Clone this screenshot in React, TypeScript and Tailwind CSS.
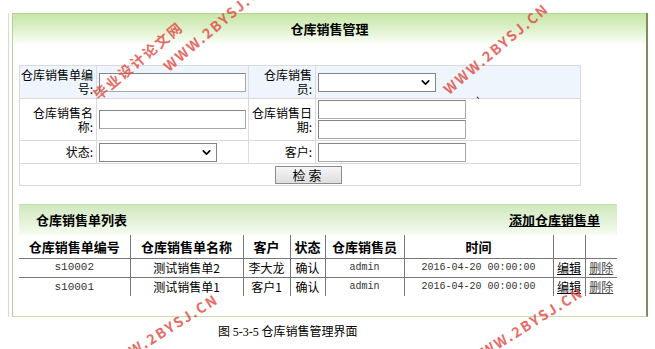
import { ChevronDown } from 'lucide-react'

const cjk = { fontFamily: '"Noto Sans CJK SC", "Liberation Sans", sans-serif' }

const Input = ({ w }: { w: string }) => (
  <div className={`h-[19px] ${w} border border-[#858585] border-r-[#a8a8a8] border-b-[#a8a8a8] bg-white`} />
)

const Select = ({ w }: { w: string }) => (
  <div className={`h-[19px] ${w} border border-[#858585] bg-white flex items-center justify-end pr-[3px]`}>
    <ChevronDown size={13} strokeWidth={3} className="text-black" />
  </div>
)

const rows = [
  { no: 's10002', name: '测试销售单2', cust: '李大龙', state: '确认', user: 'admin', time: '2016-04-20 00:00:00' },
  { no: 's10001', name: '测试销售单1', cust: '客户1', state: '确认', user: 'admin', time: '2016-04-20 00:00:00' },
]

const Mark = ({ text, cls }: { text: string; cls: string }) => (
  <span
    className={`absolute whitespace-nowrap font-bold text-[14px] tracking-[2px] text-[#e0483f] opacity-80 pointer-events-none ${cls}`}
    style={cjk}
  >
    {text}
  </span>
)

const lbl = 'border border-[#dadada] text-right whitespace-nowrap leading-[14px] pr-[3px] text-[12px]'
const cell = 'border border-[#dadada] pl-[2px]'

export default function App() {
  return (
    <div className="relative w-[655px] h-[349px] bg-white overflow-hidden text-[12px] text-black" style={cjk}>
      <div className="pl-[8px] pt-[13px]">
        <div className="w-[640px] border-l border-[#d3e3c2] pl-[3px]">
          <div className="h-[304px] border-l border-[#b9cd9f] border-r-2 border-r-[#7d8c63] border-b border-b-[#c6dab0] flex flex-col">
            {/* title */}
            <div className="h-[31px] shrink-0 border-t border-[#b5d494] bg-gradient-to-b from-[#c7e6a6] via-[#def1cb] to-[#fbfef8] flex items-center justify-center font-bold text-[13px]">
              仓库销售管理
            </div>

            {/* search */}
            <table className="ml-[6px] mt-[21px] w-[561px] border-collapse table-fixed">
              <colgroup>
                <col className="w-[77px]" />
                <col className="w-[152px]" />
                <col className="w-[67px]" />
                <col className="w-[265px]" />
              </colgroup>
              <tbody>
                <tr className="h-[33px] bg-[#eef5fc]">
                  <td className={lbl}>仓库销售单编<br />号:</td>
                  <td className={cell}><Input w="w-[147px]" /></td>
                  <td className={lbl}>仓库销售<br />员:</td>
                  <td className={cell}><Select w="w-[118px]" /></td>
                </tr>
                <tr className="h-[42px]">
                  <td className={lbl}>仓库销售名<br />称:</td>
                  <td className={cell}><Input w="w-[147px]" /></td>
                  <td className={lbl}>仓库销售日<br />期:</td>
                  <td className={cell}>
                    <div className="flex items-start">
                      <div className="flex flex-col gap-[1px]">
                        <Input w="w-[148px]" />
                        <Input w="w-[148px]" />
                      </div>
                      <span className="ml-[9px] -mt-[4px] text-[11px] leading-none">`</span>
                    </div>
                  </td>
                </tr>
                <tr className="h-[23px]">
                  <td className={lbl}>状态:</td>
                  <td className={cell}><Select w="w-[118px]" /></td>
                  <td className={lbl}>客户:</td>
                  <td className={cell}><Input w="w-[148px]" /></td>
                </tr>
                <tr className="h-[22px]">
                  <td colSpan={4} className="border border-[#dadada]">
                    <div className="flex justify-center pl-[17px]">
                      <div className="w-[67px] h-[18px] border border-[#8c8c8c] bg-gradient-to-b from-[#f6f6f6] to-[#dedede] flex items-center justify-center text-[13px] tracking-[3px]">
                        检索
                      </div>
                    </div>
                  </td>
                </tr>
              </tbody>
            </table>

            {/* list */}
            <div className="ml-[6px] mt-[18px] w-[598px]">
              <div className="h-[31px] border-t border-[#c5dfb2] bg-gradient-to-b from-[#cfe8bd] to-[#f6fcf1] flex items-center justify-between pl-[17px] pr-[17px] font-bold text-[13px]">
                <span>仓库销售单列表</span>
                <span className="underline">添加仓库销售单</span>
              </div>
              <table className="w-[598px] border-collapse table-fixed">
                <colgroup>
                  <col className="w-[111px]" />
                  <col className="w-[113px]" />
                  <col className="w-[47px]" />
                  <col className="w-[35px]" />
                  <col className="w-[79px]" />
                  <col className="w-[149px]" />
                  <col className="w-[32px]" />
                  <col className="w-[32px]" />
                </colgroup>
                <thead>
                  <tr className="h-[23px] font-bold text-[13px] text-center">
                    <th className="border-r border-b border-[#777]">仓库销售单编号</th>
                    <th className="border-r border-b border-[#777]">仓库销售单名称</th>
                    <th className="border-r border-b border-[#777]">客户</th>
                    <th className="border-r border-b border-[#777]">状态</th>
                    <th className="border-r border-b border-[#777]">仓库销售员</th>
                    <th className="border-r border-b border-[#777]">时间</th>
                    <th className="border-r border-b border-[#777]"></th>
                    <th className="border-b border-[#777]"></th>
                  </tr>
                </thead>
                <tbody>
                  {rows.map((r, i) => (
                    <tr key={r.no} className="h-[19px] text-center">
                      <td className={`border-r border-[#777] ${i === 0 ? 'border-b' : ''} text-[11px] text-[#333]`} style={{ fontFamily: '"Liberation Mono", monospace' }}>{r.no}</td>
                      <td className={`border-r border-[#777] ${i === 0 ? 'border-b' : ''} text-[12px]`}>{r.name}</td>
                      <td className={`border-r border-[#777] ${i === 0 ? 'border-b' : ''} text-[12px]`}>{r.cust}</td>
                      <td className={`border-r border-[#777] ${i === 0 ? 'border-b' : ''} text-[12px]`}>{r.state}</td>
                      <td className={`border-r border-[#777] ${i === 0 ? 'border-b' : ''} text-[10px] text-[#333]`} style={{ fontFamily: '"Liberation Mono", monospace' }}>{r.user}</td>
                      <td className={`border-r border-[#777] ${i === 0 ? 'border-b' : ''} text-[10px] text-[#333]`} style={{ fontFamily: '"Liberation Mono", monospace' }}>{r.time}</td>
                      <td className={`border-r border-[#777] ${i === 0 ? 'border-b' : ''} text-[12px] underline`}>编辑</td>
                      <td className={`border-[#777] ${i === 0 ? 'border-b' : ''} text-[12px] underline text-[#444]`}>删除</td>
                    </tr>
                  ))}
                </tbody>
              </table>
            </div>
          </div>
        </div>
      </div>

      {/* caption */}
      <div className="pl-[218px] pt-[6px] text-[12px] leading-[16px]">
        图 <span style={{ fontFamily: '"Liberation Serif", serif' }}>5-3-5</span> 仓库销售管理界面
      </div>

      {/* watermarks */}
      <Mark text="毕业设计论文网" cls="left-[82px] top-[50px] -rotate-[40deg]" />
      <Mark text="WWW.2BYSJ.CN" cls="left-[150px] top-[15px] -rotate-[40deg]" />
      <Mark text="WWW.2BYSJ.CN" cls="left-[430px] top-[38px] -rotate-[40deg]" />
      <Mark text="WWW.2BYSJ.CN" cls="left-[95px] top-[322px] -rotate-[32deg]" />
      <Mark text="WWW.2BYSJ.CN" cls="left-[460px] top-[315px] -rotate-[32deg]" />
    </div>
  )
}
